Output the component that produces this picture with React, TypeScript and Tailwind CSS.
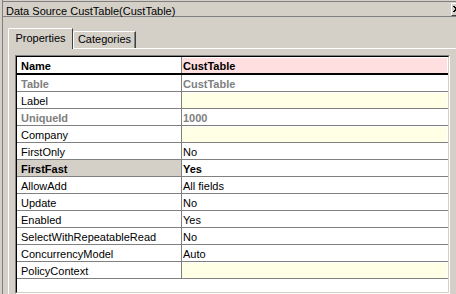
import React from "react";

type Row = {
  name: string;
  value?: string;
  nameBold?: boolean;
  nameGray?: boolean;
  nameBg?: boolean;
  valueBold?: boolean;
  valueGray?: boolean;
  valueBg?: "pink" | "yellow";
  head?: boolean;
};

const rows: Row[] = [
  { name: "Name", value: "CustTable", nameBold: true, valueBold: true, valueBg: "pink", head: true },
  { name: "Table", value: "CustTable", nameBold: true, nameGray: true, valueBold: true, valueGray: true },
  { name: "Label", valueBg: "yellow" },
  { name: "UniqueId", value: "1000", nameBold: true, nameGray: true, valueBold: true, valueGray: true },
  { name: "Company", valueBg: "yellow" },
  { name: "FirstOnly", value: "No" },
  { name: "FirstFast", value: "Yes", nameBold: true, nameBg: true, valueBold: true },
  { name: "AllowAdd", value: "All fields" },
  { name: "Update", value: "No" },
  { name: "Enabled", value: "Yes" },
  { name: "SelectWithRepeatableRead", value: "No" },
  { name: "ConcurrencyModel", value: "Auto" },
  { name: "PolicyContext", valueBg: "yellow" },
];

function PropRow({ row }: { row: Row }) {
  const nameCls = `${row.nameBold ? "font-bold" : ""} ${row.nameGray ? "text-[#808080]" : "text-black"} ${
    row.nameBg ? "bg-[#d4d0c8]" : ""
  }`;
  const valueCls = `${row.valueBold ? "font-bold" : ""} ${row.valueGray ? "text-[#808080]" : "text-black"}`;
  const bg =
    row.valueBg === "pink" ? "bg-[#ffdfdf]" : row.valueBg === "yellow" ? "bg-[#ffffe6]" : "";

  return (
    <div
      className={`grid grid-cols-[165px_266px] ${
        row.head ? "border-b-2 border-black" : "border-b border-[#808080]"
      }`}
    >
      <div className={`h-[16px] border-r border-[#808080] pl-[4px] leading-[18px] whitespace-nowrap ${nameCls}`}>
        {row.name}
      </div>
      <div className="h-[16px] pt-[1px] pr-[1px]">
        <div className={`h-[15px] pl-[1px] leading-[17px] whitespace-nowrap ${bg} ${valueCls}`}>
          {row.value}
        </div>
      </div>
    </div>
  );
}

export default function App() {
  return (
    <div className="w-[456px] h-[294px] overflow-hidden bg-[#d4d0c8] font-['Liberation_Sans',Arial,sans-serif] text-[11px] text-black">
      <div className="ml-[2px] h-full border-l border-[#808080] flex flex-col">
        {/* title bar */}
        <div className="mt-[1px] h-[16px] border-t border-b border-[#808080] flex items-start">
          <div className="pl-[3px] h-[14px] leading-[18px] whitespace-nowrap">Data Source CustTable(CustTable)</div>
          <div className="ml-auto mr-[-9px] mt-[1px] h-[13px] w-[14px] shrink-0 border-l border-t border-white border-r border-b border-r-[#404040] border-b-[#404040] bg-[#d4d0c8]">
            <svg width="12" height="11" viewBox="0 0 12 11" className="block">
              <path d="M1 2 L7 8 M2 2 L8 8 M7 2 L1 8 M8 2 L2 8" stroke="#000" strokeWidth="1" />
            </svg>
          </div>
        </div>

        {/* tabs */}
        <div className="mt-[11px] pl-[5px] flex items-end">
          <div className="relative z-10 mb-[-1px] h-[21px] w-[65px] rounded-tl-[2px] border-l border-t border-white border-r border-r-[#404040] bg-[#d4d0c8] pt-[2px] text-center leading-[14px]">
            Properties
          </div>
          <div className="h-[17px] w-[63px] rounded-tl-[2px] border-l border-t border-white border-r border-r-[#404040] shadow-[inset_-1px_0_0_#808080] bg-[#d4d0c8] text-center leading-[14px]">
            Categories
          </div>
        </div>

        {/* tab panel */}
        <div className="ml-[5px] flex-1 border-l border-t border-white pl-[6px] pt-[6px]">
          <div className="w-[435px] h-full border-l border-t border-[#808080] border-r border-b border-r-white border-b-white">
            <div className="h-full border-l border-t border-black border-r border-b border-r-[#d4d0c8] border-b-[#d4d0c8] bg-white">
              {rows.map((r) => (
                <PropRow key={r.name} row={r} />
              ))}
            </div>
          </div>
        </div>
      </div>
    </div>
  );
}
